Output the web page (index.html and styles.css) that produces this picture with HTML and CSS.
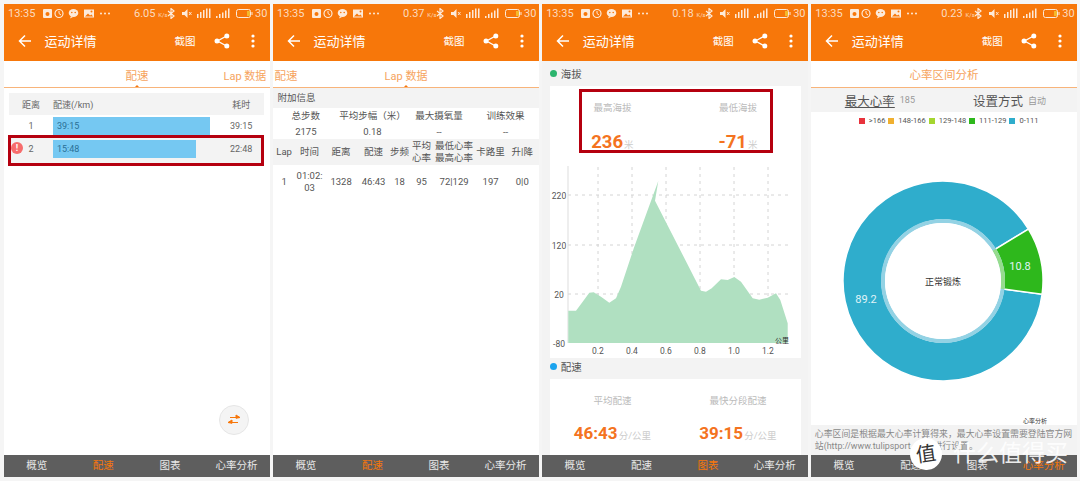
FILE: index.html
```html
<!DOCTYPE html>
<html lang="en">
<head>
    <meta charset="UTF-8">
    <meta name="viewport" content="width=device-width, initial-scale=1.0">
    <title>运动详情</title>
    <link rel="stylesheet" href="styles.css">
</head>
<body>
    <!-- shared icons -->
    <svg class="defs">
        <symbol id="st-left" viewBox="0 0 68 11">
            <rect x="0" y="1" width="9" height="9" rx="1" fill="#fff"/>
            <circle cx="4.5" cy="6" r="2" fill="#f7770a"/>
            <circle cx="16" cy="5.5" r="4" fill="none" stroke="#fff" stroke-width="1.2"/>
            <path d="M16 3v2.5l2 1.5" fill="none" stroke="#fff"/>
            <ellipse cx="30.5" cy="5" rx="4.8" ry="4" fill="#fff"/>
            <path d="M28 8l-1 2.5 3-1.5z" fill="#fff"/>
            <circle cx="28.8" cy="4.5" r=".8" fill="#f7770a"/>
            <circle cx="32.2" cy="4.5" r=".8" fill="#f7770a"/>
            <rect x="41" y="1.5" width="10" height="8" fill="#fff"/>
            <path d="M42 8.5l3-3 2 2 1.5-1 1.5 2z" fill="#f7770a"/>
            <circle cx="48.5" cy="3.5" r="1" fill="#f7770a"/>
            <circle cx="58" cy="5.5" r="1" fill="#fff"/>
            <circle cx="62" cy="5.5" r="1" fill="#fff"/>
            <circle cx="66" cy="5.5" r="1" fill="#fff"/>
        </symbol>
        <symbol id="st-right" viewBox="0 0 88 11">
            <path d="M1 3l6 5-3 2.5V.5l3 2.5-6 5" fill="none" stroke="#fff" stroke-width="1.2"/>
            <path d="M15 4h2.5l3-3v9l-3-3H15z" fill="#fff"/>
            <path d="M22 4l2.5 3M24.5 4L22 7" stroke="#fff" stroke-width=".9"/>
            <path d="M30 6h1.5v4H30zM33 4h1.500v6H33zM36 2h1.500v8H36zM39 .5h1.500V10H39zM42 .5h1.500V10H42z" fill="#fff"/>
            <path d="M49 8h1.500v2H49zM52 6h1.500v4H52zM55 4.500h1.500V10H55zM58 2.500h1.500V10H58zM61 .5h1.500V10H61z" fill="#fff"/>
            <rect x="69.500" y="1.500" width="14" height="8" rx="2" fill="none" stroke="#fff"/>
            <rect x="80" y="3" width="3" height="5" fill="#f4c430"/>
            <rect x="84.500" y="4" width="1" height="3" fill="#fff"/>
        </symbol>
        <symbol id="back" viewBox="0 0 14 14">
            <path d="M13 7H2M7 1.500L1.500 7 7 12.500" fill="none" stroke="#fff" stroke-width="1.500"/>
        </symbol>
        <symbol id="share" viewBox="0 0 16 16">
            <path d="M12.500 3L3.500 8l9 5" fill="none" stroke="#fff" stroke-width="1.300"/>
            <circle cx="12.800" cy="3" r="2.500" fill="#fff"/>
            <circle cx="3" cy="8" r="2.500" fill="#fff"/>
            <circle cx="12.800" cy="13" r="2.500" fill="#fff"/>
        </symbol>
        <symbol id="more" viewBox="0 0 4 14">
            <circle cx="2" cy="2" r="1.600" fill="#fff"/>
            <circle cx="2" cy="7" r="1.600" fill="#fff"/>
            <circle cx="2" cy="12" r="1.600" fill="#fff"/>
        </symbol>
    </svg>

    <!-- Phone 1 -->
    <div class="phone">
        <div class="header">
            <div class="status">
                <span class="time">13:35</span>
                <svg class="st-left"><use href="#st-left"/></svg>
                <span class="speed">6.05 <small>K/s</small></span>
                <svg class="st-right"><use href="#st-right"/></svg>
                <span class="level">30</span>
            </div>
            <div class="nav">
                <svg class="nav-back"><use href="#back"/></svg>
                <span class="nav-title">运动详情</span>
                <span class="nav-shot">截图</span>
                <svg class="nav-share"><use href="#share"/></svg>
                <svg class="nav-more"><use href="#more"/></svg>
            </div>
        </div>
        <div class="content">
            <div class="tabs">
                <span class="tab tab-pace">配速</span>
                <span class="tab tab-lap">Lap 数据</span>
                <i class="caret caret-one"></i>
            </div>
            <div class="pace-table">
                <div class="pace-row pace-head">
                    <span class="cell-center">距离</span>
                    <span>配速(/km)</span>
                    <span class="cell-center">耗时</span>
                </div>
                <div class="pace-row">
                    <span class="cell-center">1</span>
                    <span class="bar" style="width: 157px">39:15</span>
                    <span class="cell-center">39:15</span>
                </div>
                <div class="pace-row pace-alt">
                    <span class="cell-center">2</span>
                    <span class="bar" style="width: 143px">15:48</span>
                    <span class="cell-center">22:48</span>
                </div>
            </div>
            <div class="alert">!</div>
            <div class="mark mark-row"></div>
            <div class="swap">
                <svg width="16" height="12" viewBox="0 0 16 12">
                    <path d="M4 3.500h9M10 1l4 2.500-4 .8z" fill="#f7770a" stroke="#f7770a"/>
                    <path d="M12 8.500H3M6 6L2 8.500l4 .8z" fill="#f7770a" stroke="#f7770a"/>
                </svg>
            </div>
        </div>
        <div class="tabbar">
            <span>概览</span><span class="on">配速</span><span>图表</span><span>心率分析</span>
        </div>
    </div>

    <!-- Phone 2 -->
    <div class="phone">
        <div class="header">
            <div class="status">
                <span class="time">13:35</span>
                <svg class="st-left"><use href="#st-left"/></svg>
                <span class="speed">0.37 <small>K/s</small></span>
                <svg class="st-right"><use href="#st-right"/></svg>
                <span class="level">30</span>
            </div>
            <div class="nav">
                <svg class="nav-back"><use href="#back"/></svg>
                <span class="nav-title">运动详情</span>
                <span class="nav-shot">截图</span>
                <svg class="nav-share"><use href="#share"/></svg>
                <svg class="nav-more"><use href="#more"/></svg>
            </div>
        </div>
        <div class="content">
            <div class="tabs">
                <span class="tab tab-pace2">配速</span>
                <span class="tab tab-lap2">Lap 数据</span>
                <i class="caret caret-two"></i>
            </div>
            <div class="extra-title">附加信息</div>
            <div class="extra">
                <span>总步数</span><span>平均步幅（米）</span><span>最大摄氧量</span><span>训练效果</span>
                <span>2175</span><span>0.18</span><span>--</span><span>--</span>
            </div>
            <div class="lap-row lap-head">
                <span>Lap</span><span>时间</span><span>距离</span><span>配速</span><span>步频</span>
                <span>平均<br>心率</span><span>最低心率<br>最高心率</span><span>卡路里</span><span>升|降</span>
            </div>
            <div class="lap-row">
                <span>1</span><span>01:02:<br>03</span><span>1328</span><span>46:43</span><span>18</span>
                <span>95</span><span>72|129</span><span>197</span><span>0|0</span>
            </div>
        </div>
        <div class="tabbar">
            <span>概览</span><span class="on">配速</span><span>图表</span><span>心率分析</span>
        </div>
    </div>

    <!-- Phone 3 -->
    <div class="phone">
        <div class="header">
            <div class="status">
                <span class="time">13:35</span>
                <svg class="st-left"><use href="#st-left"/></svg>
                <span class="speed">0.18 <small>K/s</small></span>
                <svg class="st-right"><use href="#st-right"/></svg>
                <span class="level">30</span>
            </div>
            <div class="nav">
                <svg class="nav-back"><use href="#back"/></svg>
                <span class="nav-title">运动详情</span>
                <span class="nav-shot">截图</span>
                <svg class="nav-share"><use href="#share"/></svg>
                <svg class="nav-more"><use href="#more"/></svg>
            </div>
        </div>
        <div class="content content-gray">
            <div class="section"><i class="dot dot-green"></i>海拔</div>
            <div class="card">
                <div class="stats">
                    <div class="stat">
                        <div class="stat-label">最高海拔</div>
                        <div class="stat-value">236<small>米</small></div>
                    </div>
                    <div class="stat">
                        <div class="stat-label">最低海拔</div>
                        <div class="stat-value">-71<small>米</small></div>
                    </div>
                </div>
                <svg class="chart" viewBox="549 160 251 198">
                    <g class="grid">
                        <path d="M597 167V343M631 167V343M665 167V343M699 167V343M733 167V343M767 167V343"/>
                        <path d="M567 195H787M567 245H787M567 294H787"/>
                    </g>
                    <path class="axis" d="M567 166V343"/>
                    <path class="area" d="M567.300 343V310.700L575 310.700 581.700 301.700 588.300 292.700 592.700 292.300 600 296.700 608.300 302.700 615 298.300 620 286.700 633.300 246.700 654 190 657.300 181 654 200.700 700 290.700 705 291.700 710.700 288.300 720 279.300 726.700 280 733.300 277 740 281.700 751.700 298.300 758.300 299.700 766.700 297.700 775 293.300 779.300 300 786.700 323.300V343Z"/>
                    <g class="ticks">
                        <text x="558" y="199">220</text>
                        <text x="558" y="249">120</text>
                        <text x="558" y="298">20</text>
                        <text x="558" y="347">-80</text>
                        <text x="597" y="354">0.2</text>
                        <text x="631" y="354">0.4</text>
                        <text x="665" y="354">0.6</text>
                        <text x="699" y="354">0.8</text>
                        <text x="733" y="354">1.0</text>
                        <text x="767" y="354">1.2</text>
                    </g>
                    <text class="unit" x="781" y="343">公里</text>
                </svg>
            </div>
            <div class="section section-two"><i class="dot dot-blue"></i>配速</div>
            <div class="card">
                <div class="stats stats-pace">
                    <div class="stat">
                        <div class="stat-label">平均配速</div>
                        <div class="stat-value">46:43<small>分/公里</small></div>
                    </div>
                    <div class="stat">
                        <div class="stat-label">最快分段配速</div>
                        <div class="stat-value">39:15<small>分/公里</small></div>
                    </div>
                </div>
            </div>
            <div class="mark mark-stats"></div>
        </div>
        <div class="tabbar">
            <span>概览</span><span>配速</span><span class="on">图表</span><span>心率分析</span>
        </div>
    </div>

    <!-- Phone 4 -->
    <div class="phone">
        <div class="header">
            <div class="status">
                <span class="time">13:35</span>
                <svg class="st-left"><use href="#st-left"/></svg>
                <span class="speed">0.23 <small>K/s</small></span>
                <svg class="st-right"><use href="#st-right"/></svg>
                <span class="level">30</span>
            </div>
            <div class="nav">
                <svg class="nav-back"><use href="#back"/></svg>
                <span class="nav-title">运动详情</span>
                <span class="nav-shot">截图</span>
                <svg class="nav-share"><use href="#share"/></svg>
                <svg class="nav-more"><use href="#more"/></svg>
            </div>
        </div>
        <div class="content content-column">
            <div class="tabs tabs-single">心率区间分析</div>
            <div class="hr-info">
                <span class="hr-name hr-max">最大心率</span><span class="hr-val">185</span>
                <span class="hr-name hr-set">设置方式</span><span class="hr-val">自动</span>
            </div>
            <div class="legend">
                <i class="sw sw-red"></i>&gt;166
                <i class="sw sw-yellow"></i>148-166
                <i class="sw sw-lime"></i>129-148
                <i class="sw sw-green"></i>111-129
                <i class="sw sw-blue"></i>0-111
            </div>
            <svg class="donut" viewBox="-100 -100 200 200">
                <path class="slice-blue" d="M99.120 13.230A100 100 0 1 1 85.450 -51.950L52.100 -31.700A61 61 0 1 0 60.500 8.070Z"/>
                <path class="slice-green" d="M85.450 -51.950A100 100 0 0 1 99.120 13.230L60.500 8.070A61 61 0 0 0 52.100 -31.700Z"/>
                <circle class="donut-ring" r="60"/>
                <path class="donut-ring-green" d="M51.300 -31.200A60 60 0 0 1 59.500 7.900"/>
                <circle class="donut-hole" r="58"/>
                <text class="donut-center" x="0" y="4">正常锻炼</text>
                <text class="donut-num" x="77" y="-11">10.8</text>
                <text class="donut-num" x="-77" y="22">89.2</text>
            </svg>
            <div class="note">
                <div class="note-tag">心率分析</div>
                <p>心率区间是根据最大心率计算得来，最大心率设置需要登陆官方网站(http://www.tulipsport.com)进行设置。</p>
            </div>
        </div>
        <div class="tabbar">
            <span>概览</span><span>配速</span><span>图表</span><span class="on">心率分析</span>
        </div>
    </div>

    <!-- site watermark -->
    <div class="watermark">
        <span class="wm-badge">值</span>
        <span class="wm-text">什么值得买</span>
    </div>
</body>
</html>
```
FILE: styles.css
```css
* {
    box-sizing: border-box;
}

body {
    position: relative;
    display: flex;
    gap: 2.8px;
    width: 1080px;
    height: 481px;
    margin: 0;
    padding: 4px 0 4px 3.5px;
    overflow: hidden;
    background-color: #f5f5f5;
    color: #555;
    font-family: Roboto, "Noto Sans CJK SC", sans-serif;
}

.defs {
    position: absolute;
    width: 0;
    height: 0;
}

.phone {
    display: flex;
    flex-direction: column;
    flex: none;
    width: 266.3px;
    height: 473px;
    background-color: #fff;
}

/* orange top part */
.header {
    flex: none;
    height: 57px;
    background-color: #f7770a;
    color: #fff;
}

.status {
    display: flex;
    align-items: center;
    height: 16px;
    padding: 3px 0 0 4.5px;
    font-size: 11px;
    color: #fbdcc0;
}

.status svg {
    flex: none;
    opacity: 0.85;
}

.time {
    flex: none;
    width: 35px;
}

.st-left {
    width: 68px;
    height: 11px;
}

.speed {
    flex: none;
    width: 33px;
    margin-left: 23px;
    white-space: nowrap;
}

.speed small {
    font-size: 6px;
}

.st-right {
    width: 88px;
    height: 11px;
}

.nav {
    display: flex;
    align-items: center;
    height: 41px;
}

.nav-back {
    width: 14px;
    height: 14px;
    margin-left: 14px;
}

.nav-title {
    width: 54px;
    margin-left: 13px;
    font-size: 13px;
    white-space: nowrap;
}

.nav-shot {
    margin-left: 76px;
    font-size: 10.5px;
}

.nav-share {
    width: 16px;
    height: 16px;
    margin-left: 18px;
}

.nav-more {
    width: 4px;
    height: 14px;
    margin-left: 21px;
}

.content {
    position: relative;
    flex: 1;
    min-height: 0;
    overflow: hidden;
}

.content-gray {
    background-color: #f3f3f3;
}

.content-column {
    display: flex;
    flex-direction: column;
}

/* tabs */
.tabs {
    position: relative;
    height: 27px;
    border-bottom: 1px solid #f8b47a;
    color: #f6a45e;
    font-size: 11.5px;
}

.tab {
    position: absolute;
    top: 6px;
    white-space: nowrap;
}

.tab-pace {
    left: 122px;
}

.tab-lap {
    left: 220px;
    font-size: 11px;
}

.tab-pace2 {
    left: 2px;
}

.tab-lap2 {
    left: 112px;
    font-size: 11px;
}

.caret {
    position: absolute;
    bottom: 0;
    border-left: 2px solid transparent;
    border-right: 2px solid transparent;
    border-bottom: 2px solid #f7770a;
}

.caret-one {
    left: 131px;
}

.caret-two {
    left: 131px;
}

.tabs-single {
    flex: none;
    padding-top: 5px;
    text-align: center;
}

/* pace list */
.pace-table {
    margin: 5px 5.5px 0;
    font-size: 9px;
    color: #666;
}

.pace-row {
    display: grid;
    grid-template-columns: 44px 157px 1fr;
    align-items: center;
    height: 18px;
    margin-top: 2px;
}

.pace-head {
    height: 22px;
    margin-top: 0;
    background-color: #f3f3f3;
}

.pace-alt {
    height: 27px;
    padding: 3px 0 6px;
    background-color: #f3f3f3;
}

.cell-center {
    text-align: center;
}

.pace-row .cell-center:last-child {
    padding-left: 8px;
}

.bar {
    display: block;
    height: 18px;
    padding-left: 4px;
    background-color: #75c8f2;
    color: #2a6f96;
    line-height: 18px;
}

.alert {
    position: absolute;
    top: 81px;
    left: 7.5px;
    width: 12px;
    height: 12px;
    border-radius: 50%;
    background-color: #f76c6c;
    color: #fff;
    font-size: 9px;
    font-weight: bold;
    line-height: 12px;
    text-align: center;
}

/* red annotation boxes */
.mark {
    position: absolute;
    border: 3px solid #b5000f;
}

.mark-row {
    top: 74px;
    left: 4.5px;
    width: 256px;
    height: 31px;
}

.mark-stats {
    top: 28px;
    left: 37px;
    width: 194px;
    height: 64px;
}

.swap {
    position: absolute;
    top: 344px;
    left: 215px;
    display: flex;
    align-items: center;
    justify-content: center;
    width: 30px;
    height: 30px;
    border: 1px solid #e6e6e6;
    border-radius: 50%;
    background-color: #f4f4f4;
}

/* lap table */
.extra-title {
    height: 20px;
    padding-left: 5px;
    background-color: #f3f3f3;
    font-size: 9.5px;
    line-height: 19px;
}

.extra {
    display: grid;
    grid-template-columns: repeat(4, 1fr);
    height: 31px;
    font-size: 9.5px;
    line-height: 15px;
    text-align: center;
}

.lap-row {
    display: grid;
    grid-template-columns: 23px 28px 35px 30px 22px 22px 43px 30px 1fr;
    align-items: center;
    height: 26px;
    font-size: 9.5px;
    line-height: 12.5px;
    text-align: center;
}

.lap-head {
    background-color: #f3f3f3;
}

.lap-row:last-child {
    height: 34px;
}

/* chart cards */
.section {
    display: flex;
    align-items: center;
    gap: 4px;
    height: 25px;
    padding: 0 0 1px 8px;
    font-size: 10.500px;
    color: #555;
}

.section-two {
    height: 21px;
    padding-bottom: 4px;
}

.dot {
    width: 7px;
    height: 7px;
    border-radius: 50%;
}

.dot-green {
    background-color: #2cb56e;
}

.dot-blue {
    background-color: #1aa3ee;
}

.card {
    width: 251px;
    margin-left: 8px;
    background-color: #fff;
}

.stats {
    display: grid;
    grid-template-columns: 1fr 1fr;
    height: 74px;
    padding-top: 14px;
    text-align: center;
}

.stats-pace {
    height: 76px;
}

.stat-label {
    font-size: 9.5px;
    color: #bbb;
}

.stat-value {
    margin-top: 16px;
    color: #f47320;
    font-size: 18.5px;
    font-weight: bold;
    line-height: 24px;
}

.stat-value small {
    margin-left: 1px;
    color: #ccc;
    font-size: 9.5px;
    font-weight: normal;
}

.stats-pace .stat-value {
    margin-top: 14px;
    font-size: 17px;
}

.chart {
    display: block;
    width: 251px;
    height: 198px;
}

.grid path {
    fill: none;
    stroke: #d4d4d4;
    stroke-dasharray: 3 4;
}

.axis {
    fill: none;
    stroke: #ddd;
}

.area {
    fill: #b0e0c1;
}

.ticks text {
    fill: #555;
    font-size: 8.500px;
    text-anchor: middle;
}

.unit {
    fill: #333;
    font-size: 7px;
    text-anchor: middle;
}

/* heart rate */
.hr-info {
    display: flex;
    flex: none;
    align-items: center;
    height: 24px;
    padding-left: 34px;
    background-color: #f3f3f3;
}

.hr-name {
    color: #555;
    font-size: 12.500px;
    white-space: nowrap;
}

.hr-max {
    text-decoration: underline;
}

.hr-set {
    margin-left: 58px;
}

.hr-val {
    margin-left: 5px;
    color: #999;
    font-size: 9px;
}

.legend {
    flex: none;
    display: flex;
    align-items: center;
    height: 17px;
    padding-left: 48px;
    font-size: 7.500px;
    color: #555;
}

.sw {
    width: 6px;
    height: 6px;
    margin: 0 4px 0 3px;
}

.sw-red {
    margin-left: 0;
    background-color: #e8323c;
}

.sw-yellow {
    background-color: #f0b030;
}

.sw-lime {
    background-color: #a5d630;
}

.sw-green {
    background-color: #2eb81c;
}

.sw-blue {
    background-color: #2fadcc;
}

.donut {
    flex: none;
    display: block;
    width: 200px;
    height: 200px;
    margin: 52px 0 0 32.500px;
}

.slice-blue {
    fill: #2fadcc;
    stroke: #fff;
    stroke-width: 1.5;
}

.slice-green {
    fill: #2eb81c;
    stroke: #fff;
    stroke-width: 1.5;
}

.donut-ring {
    fill: none;
    stroke: #93d2e4;
    stroke-width: 4;
}

.donut-ring-green {
    fill: none;
    stroke: #96dc8e;
    stroke-width: 4;
}

.donut-hole {
    fill: #fff;
}

.donut-center {
    fill: #333;
    font-size: 9px;
    text-anchor: middle;
}

.donut-num {
    fill: #e0f4f8;
    font-size: 11px;
    text-anchor: middle;
}

.note {
    position: absolute;
    right: 0;
    bottom: 0;
    left: 0;
}

.note-tag {
    padding-right: 30px;
    color: #333;
    font-size: 6px;
    text-align: right;
}

.note p {
    height: 30px;
    margin: 0;
    padding: 3px 0 0 4px;
    background-color: #f3f3f3;
    color: #888;
    font-size: 8.9px;
    line-height: 12px;
}

/* bottom bar */
.tabbar {
    display: grid;
    flex: none;
    grid-template-columns: repeat(4, 1fr);
    height: 22px;
    background-color: #5e5e5e;
    color: #e8e8e8;
    font-size: 10.500px;
    line-height: 22px;
    text-align: center;
}

.tabbar .on {
    color: #f7770a;
}

/* watermark over the last phone */
.watermark {
    position: absolute;
    top: 438px;
    left: 910px;
    display: flex;
    align-items: center;
    gap: 11px;
}

.wm-badge {
    width: 32px;
    height: 32px;
    border-radius: 50%;
    background-color: #fff;
    color: #333;
    font-size: 20px;
    line-height: 32px;
    text-align: center;
    transform: rotate(-8deg);
}

.wm-text {
    color: rgba(255, 255, 255, 0.9);
    font-size: 23px;
    line-height: 32px;
    white-space: nowrap;
}
```
